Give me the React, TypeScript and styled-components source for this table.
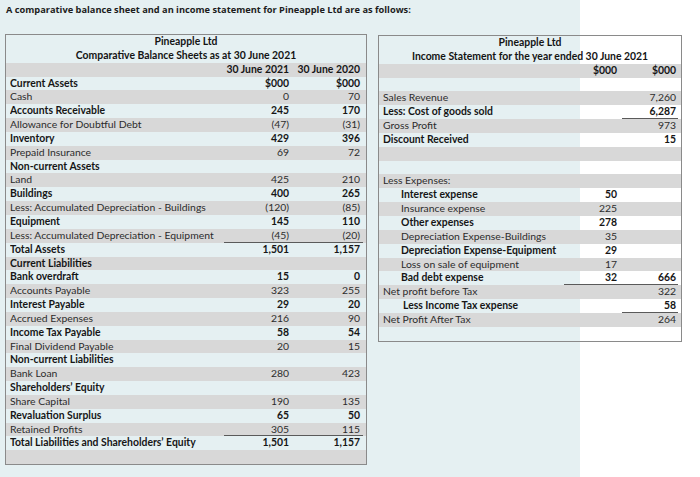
import React, { FC } from 'react'
import styled, { createGlobalStyle } from 'styled-components'

const ROW_H = '13.85px'

const GlobalStyle = createGlobalStyle`
    html, body {
        margin: 0;
        padding: 0;
    }

    body {
        min-height: 477px;
        background: linear-gradient(to right, #e5f0f2 0, #e5f0f2 580px, #ffffff 580px);
        font-family: Lato, 'Open Sans', sans-serif;
        color: #222;
    }
`

type Line = {
    label?: string
    a?: string
    b?: string
    head?: boolean
    indent?: number
    ruleA?: boolean
    ruleB?: boolean
}

const balanceRows: Line[] = [
    { a: '30 June 2021', b: '30 June 2020', head: true },
    { label: 'Current Assets', a: '$000', b: '$000', head: true },
    { label: 'Cash', a: '0', b: '70' },
    { label: 'Accounts Receivable', a: '245', b: '170' },
    { label: 'Allowance for Doubtful Debt', a: '(47)', b: '(31)' },
    { label: 'Inventory', a: '429', b: '396' },
    { label: 'Prepaid Insurance', a: '69', b: '72' },
    { label: 'Non-current Assets', head: true },
    { label: 'Land', a: '425', b: '210' },
    { label: 'Buildings', a: '400', b: '265' },
    { label: 'Less: Accumulated Depreciation - Buildings', a: '(120)', b: '(85)' },
    { label: 'Equipment', a: '145', b: '110' },
    { label: 'Less: Accumulated Depreciation - Equipment', a: '(45)', b: '(20)', ruleA: true, ruleB: true },
    { label: 'Total Assets', a: '1,501', b: '1,157', head: true },
    { label: 'Current Liabilities', head: true },
    { label: 'Bank overdraft', a: '15', b: '0' },
    { label: 'Accounts Payable', a: '323', b: '255' },
    { label: 'Interest Payable', a: '29', b: '20' },
    { label: 'Accrued Expenses', a: '216', b: '90' },
    { label: 'Income Tax Payable', a: '58', b: '54' },
    { label: 'Final Dividend Payable', a: '20', b: '15' },
    { label: 'Non-current Liabilities', head: true },
    { label: 'Bank Loan', a: '280', b: '423' },
    { label: 'Shareholders\u2019 Equity', head: true },
    { label: 'Share Capital', a: '190', b: '135' },
    { label: 'Revaluation Surplus', a: '65', b: '50' },
    { label: 'Retained Profits', a: '305', b: '115', ruleA: true, ruleB: true },
    { label: 'Total Liabilities and Shareholders\u2019 Equity', a: '1,501', b: '1,157', head: true },
    {},
]

const incomeRows: Line[] = [
    { a: '$000', b: '$000', head: true },
    {},
    { label: 'Sales Revenue', b: '7,260' },
    { label: 'Less: Cost of goods sold', b: '6,287', ruleB: true },
    { label: 'Gross Profit', b: '973' },
    { label: 'Discount Received', b: '15' },
    {},
    {},
    { label: 'Less Expenses:' },
    { label: 'Interest expense', a: '50', indent: 18 },
    { label: 'Insurance expense', a: '225', indent: 18 },
    { label: 'Other expenses', a: '278', indent: 18 },
    { label: 'Depreciation Expense-Buildings', a: '35', indent: 18 },
    { label: 'Depreciation Expense-Equipment', a: '29', indent: 18 },
    { label: 'Loss on sale of equipment', a: '17', indent: 18 },
    { label: 'Bad debt expense', a: '32', b: '666', indent: 18, ruleA: true, ruleB: true },
    { label: 'Net profit before Tax', b: '322' },
    { label: 'Less Income Tax expense', b: '58', indent: 20, ruleB: true },
    { label: 'Net Profit After Tax', b: '264' },
    {},
]

const App: FC = () => {
    return (
        <>
            <GlobalStyle />
            <Page>
                <Intro>A comparative balance sheet and an income statement for Pineapple Ltd are as follows:</Intro>
                <Sheets>
                    <Sheet width={362}>
                        <Title>Pineapple Ltd</Title>
                        <Title>Comparative Balance Sheets as at 30 June 2021</Title>
                        {balanceRows.map((row, i) => (
                            <SheetRow key={i} row={row} striped={i % 2 === 0} cols='1fr 68px 71px' padA={3} padB={3} />
                        ))}
                    </Sheet>
                    <Sheet width={304} offset={1}>
                        <Title>Pineapple Ltd</Title>
                        <Title>Income Statement for the year ended 30 June 2021</Title>
                        {incomeRows.map((row, i) => (
                            <SheetRow key={i} row={row} striped={i % 2 === 0} cols='1fr 58px 56px' padA={5} padB={2} />
                        ))}
                    </Sheet>
                </Sheets>
            </Page>
        </>
    )
}

const SheetRow: FC<{
    row: Line
    striped: boolean
    cols: string
    padA: number
    padB: number
}> = ({ row, striped, cols, padA, padB }) => {
    // white rows read heavier than the grey ones in the original sheet
    const bold = row.head || !striped
    return (
        <Row $striped={striped} $cols={cols} $bold={bold}>
            <Label $indent={row.indent ?? 0}>{row.label}</Label>
            <Num $pad={padA} $rule={row.ruleA}>{row.a}</Num>
            <Num $pad={padB} $rule={row.ruleB}>{row.b}</Num>
        </Row>
    )
}

const Page = styled.div`
    padding: 3px 0 0 5px;
`

const Intro = styled.p`
    margin: 0 0 0 1px;
    font-family: 'Open Sans', sans-serif;
    font-weight: 700;
    font-size: 9.25px;
    line-height: 13px;
    color: #1c1c1c;
`

const Sheets = styled.div`
    display: flex;
    align-items: flex-start;
    gap: 11px;
    margin-top: 18px;
`

const Sheet = styled.div<{ width: number; offset?: number }>`
    width: ${props => props.width}px;
    margin-top: ${props => props.offset ?? 0}px;
    box-sizing: border-box;
    border: 1px solid #8a8a8a;
    display: flex;
    flex-direction: column;
`

const Title = styled.div`
    height: ${ROW_H};
    line-height: ${ROW_H};
    text-align: center;
    font-size: 10.4px;
    font-weight: 700;
    color: #141414;
    white-space: nowrap;
`

const Row = styled.div<{ $striped: boolean; $cols: string; $bold: boolean }>`
    display: grid;
    grid-template-columns: ${props => props.$cols};
    padding: 0 3px 0 4px;
    height: ${ROW_H};
    line-height: ${ROW_H};
    background: ${props => (props.$striped ? '#d8d8d8' : 'transparent')};
    font-size: 10.4px;
    font-weight: ${props => (props.$bold ? 700 : 400)};
    color: ${props => (props.$bold ? '#161616' : '#2c2c2c')};
    white-space: nowrap;
`

const Label = styled.span<{ $indent: number }>`
    padding-left: ${props => props.$indent}px;
    overflow: hidden;
`

const Num = styled.span<{ $pad: number; $rule?: boolean }>`
    text-align: right;
    padding-right: ${props => props.$pad}px;
    box-shadow: ${props => (props.$rule ? 'inset 0 -1px 0 #5a5a5a' : 'none')};
`

export default App
